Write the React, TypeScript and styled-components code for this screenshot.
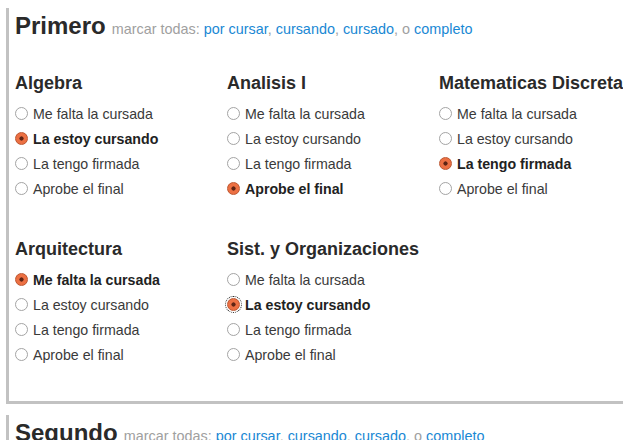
import React from 'react'
import styled, { createGlobalStyle } from 'styled-components'

const GlobalStyle = createGlobalStyle`
  html, body {
    margin: 0;
    padding: 0;
    background: #fff;
    overflow: hidden;
  }
  body {
    font-family: 'Liberation Sans', Arial, sans-serif;
    color: #333;
  }
`

const OPTIONS = [
  'Me falta la cursada',
  'La estoy cursando',
  'La tengo firmada',
  'Aprobe el final',
]

type Subject = { name: string; state: number; focused?: boolean }
type Year = { title: string; subjects: Subject[] }

const YEARS: Year[] = [
  {
    title: 'Primero',
    subjects: [
      { name: 'Algebra', state: 1 },
      { name: 'Analisis I', state: 3 },
      { name: 'Matematicas Discreta', state: 2 },
      { name: 'Arquitectura', state: 0 },
      { name: 'Sist. y Organizaciones', state: 1, focused: true },
    ],
  },
  { title: 'Segundo', subjects: [] },
]

const MARKS = ['por cursar', 'cursando', 'cursado']

const App: React.FC = () => (
  <Page>
    <GlobalStyle />
    {YEARS.map((year) => (
      <StyledYear key={year.title}>
        <StyledYearHeader>
          <StyledYearTitle>{year.title}</StyledYearTitle>
          <StyledMarkAll>
            marcar todas:{' '}
            {MARKS.map((m) => (
              <React.Fragment key={m}>
                <StyledLink href="#">{m}</StyledLink>,{' '}
              </React.Fragment>
            ))}
            o <StyledLink href="#">completo</StyledLink>
          </StyledMarkAll>
        </StyledYearHeader>
        {year.subjects.length > 0 && (
          <StyledGrid>
            {year.subjects.map((s) => (
              <div key={s.name}>
                <StyledSubjectTitle>{s.name}</StyledSubjectTitle>
                {OPTIONS.map((opt, i) => (
                  <StyledOption key={opt} selected={i === s.state}>
                    <StyledRadio
                      type="radio"
                      name={s.name}
                      defaultChecked={i === s.state}
                      focused={s.focused && i === s.state}
                    />
                    {opt}
                  </StyledOption>
                ))}
              </div>
            ))}
          </StyledGrid>
        )}
      </StyledYear>
    ))}
  </Page>
)

const Page = styled.div`
  padding-top: 8px;
  padding-left: 6px;
`

const StyledYear = styled.section`
  border-left: 3px solid #c2c2c2;
  border-bottom: 3px solid #c2c2c2;
  padding: 4px 0 34px 6px;
  margin-bottom: 11px;
`

const StyledYearHeader = styled.div`
  display: flex;
  align-items: baseline;
  white-space: nowrap;
`

const StyledYearTitle = styled.h2`
  margin: 0;
  font-size: 24px;
  line-height: 28px;
  font-weight: bold;
  color: #2a2a2a;
`

const StyledMarkAll = styled.span`
  margin-left: 6px;
  font-size: 14.4px;
  color: #a0a0a0;
`

const StyledLink = styled.a`
  color: #1a88d4;
  text-decoration: none;
`

const StyledGrid = styled.div`
  display: grid;
  grid-template-columns: repeat(3, 212px);
  row-gap: 37px;
  margin-top: 32px;
`

const StyledSubjectTitle = styled.h3`
  margin: 0 0 7px;
  font-size: 18px;
  line-height: 22px;
  font-weight: bold;
  color: #2a2a2a;
  white-space: nowrap;
`

const StyledOption = styled.label<{ selected: boolean }>`
  display: flex;
  align-items: center;
  height: 25px;
  font-size: 14.2px;
  white-space: nowrap;
  font-weight: ${(p) => (p.selected ? 'bold' : 'normal')};
  color: ${(p) => (p.selected ? '#222' : '#3a3a3a')};
`

const StyledRadio = styled.input<{ focused?: boolean }>`
  appearance: none;
  width: 13px;
  height: 13px;
  margin: 0 5px 0 0;
  border-radius: 50%;
  border: 1px solid #a4a4a4;
  background: #fff;
  box-sizing: border-box;
  &:checked {
    border-color: #bd5630;
    background: radial-gradient(circle, #5e2414 0 1.8px, #ec7043 2.4px);
  }
  outline: ${(p) => (p.focused ? '1px dotted #222' : 'none')};
  outline-offset: 1px;
`

export default App
